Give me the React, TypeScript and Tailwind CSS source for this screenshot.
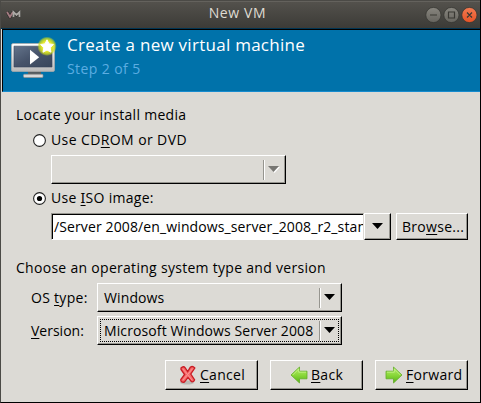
import type { ReactNode } from "react";

const raised =
  "border-t border-l border-r border-b border-t-white border-l-white border-r-black border-b-black shadow-[inset_-1px_-1px_0_#96958f]";

function Label({ children, className = "" }: { children: ReactNode; className?: string }) {
  return <span className={`block whitespace-pre leading-[20px] ${className}`}>{children}</span>;
}

function Key({ children }: { children: string }) {
  return <span className="underline decoration-1 underline-offset-2">{children}</span>;
}

function Radio({ checked = false }: { checked?: boolean }) {
  return (
    <svg width="13" height="13" viewBox="0 0 13 13" className="shrink-0">
      <circle cx="6.5" cy="6.5" r="5.9" fill="#fff" stroke="#222" strokeWidth="1.1" />
      {checked && <circle cx="6.5" cy="6.5" r="2.6" fill="#000" />}
    </svg>
  );
}

function Arrow({ disabled = false }: { disabled?: boolean }) {
  return (
    <svg width="12" height="7" viewBox="0 0 12 7" className="shrink-0">
      {disabled && <path d="M1 1h11L6.5 7z" fill="#fff" />}
      <path d="M0 0h11L5.5 6z" fill={disabled ? "#777672" : "#000"} />
    </svg>
  );
}

function Combo({
  text = "",
  width,
  disabled = false,
  focused = false,
}: {
  text?: string;
  width: string;
  disabled?: boolean;
  focused?: boolean;
}) {
  return (
    <div className={`flex h-[29px] p-[2px] ${raised} ${width}`}>
      <div
        className={`flex min-w-0 flex-1 items-center border border-dotted pl-[3px] ${focused ? "border-black" : "border-transparent"}`}
      >
        <Label className="w-0 flex-1 tracking-[0.11px]">{text}</Label>
        <span className="mr-[3px] h-[20px] w-[2px] border-r border-l border-l-[#96958f] border-r-white" />
        <Arrow disabled={disabled} />
        <span className="w-[2px] shrink-0" />
      </div>
    </div>
  );
}

function CancelIcon() {
  return (
    <svg width="18" height="20" viewBox="0 0 18 20">
      <ellipse cx="8" cy="17.5" rx="7" ry="2" fill="#a9a8a3" opacity=".65" />
      <path
        d="M2 3Q4.5 .6 6.2 2.8L8.7 6.5L11.3 2.3Q13.5 .5 15.8 3L11.8 9L15.6 14.8Q15 17.2 12.5 16.7L9 12.5L5.3 17.2Q1.5 17.5 1.8 14.5L5.6 9.5L2 4.5Z"
        fill="#f66b6b"
        stroke="#c91c24"
        strokeWidth="1.3"
      />
      <path d="M4 4L13 15M13.5 3.7L4 15" stroke="#ff9292" strokeWidth="1" />
    </svg>
  );
}

function GreenArrow({ back = false }: { back?: boolean }) {
  return (
    <svg width="18" height="18" viewBox="0 0 18 18" className={back ? "-scale-x-100" : ""}>
      <defs>
        <linearGradient id="leaf" x1="0" y1="0" x2="0" y2="1">
          <stop stopColor="#b8ee71" />
          <stop offset=".5" stopColor="#8bd83b" />
          <stop offset="1" stopColor="#55b414" />
        </linearGradient>
      </defs>
      <path d="M1 5.2H8.5V1L17 9L8.5 17V12.8H1Z" fill="url(#leaf)" stroke="#62ac28" strokeWidth=".8" />
      <path d="M2 6.2H9.3V3L15.3 9" fill="none" stroke="#c5f488" strokeWidth=".8" />
    </svg>
  );
}

function Action({ icon, children, className = "" }: { icon: ReactNode; children: ReactNode; className?: string }) {
  return (
    <button className={`flex h-[30px] w-[93px] items-center ${raised} ${className}`}>
      {icon}
      <Label className="-mt-px ml-[3px]">{children}</Label>
    </button>
  );
}

function Monitor() {
  return (
    <svg width="46" height="44" viewBox="0 0 46 44" className="shrink-0">
      <defs>
        <linearGradient id="bezel" x1="0" y1="0" x2="0" y2="1">
          <stop stopColor="#fff" />
          <stop offset="1" stopColor="#b9b9b9" />
        </linearGradient>
        <linearGradient id="screen" x1="0" y1="0" x2="1" y2="1">
          <stop stopColor="#64748b" />
          <stop offset=".5" stopColor="#46536a" />
          <stop offset="1" stopColor="#38465b" />
        </linearGradient>
        <radialGradient id="glow">
          <stop stopColor="#fffbb0" />
          <stop offset=".55" stopColor="#e1e52b" />
          <stop offset=".8" stopColor="#cddd1c" stopOpacity=".75" />
          <stop offset="1" stopColor="#cddd1c" stopOpacity="0" />
        </radialGradient>
      </defs>
      <path d="M17 35h13v4H17z" fill="#555c60" />
      <rect x="12.5" y="38.3" width="19.5" height="3.2" rx="1" fill="#d8d8d8" stroke="#929292" strokeWidth=".7" />
      <rect x=".5" y="7.5" width="43" height="28" rx="1.5" fill="url(#bezel)" stroke="#aaa" strokeWidth=".7" />
      <path d="M3 10.2h38V31H3z" fill="url(#screen)" stroke="#35445a" strokeWidth=".6" />
      <path d="M19 13.8L28.2 21.2L19 28.5Z" fill="#fff" />
      <circle cx="36" cy="10.3" r="9.8" fill="url(#glow)" />
      <path d="M36 3.8L38 7.9L42.4 8.5L39.2 11.7L40 16.2L36 14L32 16.2L32.8 11.7L29.6 8.5L34 7.9Z" fill="#fff" stroke="#fff" strokeWidth="1" strokeLinejoin="round" />
    </svg>
  );
}

function WindowControls() {
  return (
    <svg width="54" height="18" viewBox="0 0 54 18">
      <defs>
        <linearGradient id="grayButton" x1="0" y1="0" x2="0" y2="1">
          <stop stopColor="#88867f" />
          <stop offset="1" stopColor="#66645e" />
        </linearGradient>
        <linearGradient id="closeButton" x1="0" y1="0" x2="0" y2="1">
          <stop stopColor="#f37b52" />
          <stop offset="1" stopColor="#e65225" />
        </linearGradient>
      </defs>
      <circle cx="9.4" cy="9" r="7.6" fill="url(#grayButton)" stroke="#34332f" strokeWidth=".7" />
      <circle cx="27.4" cy="9" r="7.6" fill="url(#grayButton)" stroke="#34332f" strokeWidth=".7" />
      <circle cx="45.4" cy="9" r="7.6" fill="url(#closeButton)" stroke="#34332f" strokeWidth=".7" />
      <path d="M6 9h7M24.5 6h6v6h-6zM43 6.5l5 5m0-5l-5 5" fill="none" stroke="#393833" strokeWidth="1.2" />
    </svg>
  );
}

export default function App() {
  return (
    <main className="flex h-[403px] w-[481px] flex-col overflow-hidden border-r border-b border-l border-r-black border-b-black border-l-[#4b4a46] bg-[#dcdad5] font-['Open_Sans','Noto_Sans',sans-serif] text-[14px] tracking-[0.29px] text-black">
      <header className="grid h-[29px] shrink-0 grid-cols-[75px_1fr_75px] items-center border-t border-b border-t-[#4b4a46] border-b-[#003452] bg-linear-to-b from-[#54524d] to-[#3c3b37] shadow-[inset_0_1px_0_#64625d]">
        <svg width="16" height="9" viewBox="0 0 16 9" className="-mt-px ml-[5px]">
          <path d="M1 2l3 5 3-5M7.5 7V2l3 3 3-3v5" fill="none" stroke="#292926" strokeWidth="3" />
          <path d="M1 2l3 5 3-5" fill="none" stroke="#a47c82" strokeWidth="1.9" />
          <path d="M7.5 7V2l3 3 3-3v5" fill="none" stroke="#aaa8a3" strokeWidth="1.9" />
        </svg>
        <span className="-mt-[3px] -ml-[6px] text-center leading-[20px] tracking-[0.65px] text-[#dfdbd2]">New VM</span>
        <div className="ml-[19px]">
          <WindowControls />
        </div>
      </header>

      <section className="ml-px flex h-[63px] shrink-0 border-t border-b border-l border-t-black border-b-[#168bce] border-l-black bg-[#0072aa] pl-[8px]">
        <div className="pt-[6px]">
          <Monitor />
        </div>
        <div className="ml-[10px] pt-[4px]">
          <h1 className="text-[17px] leading-[22px] tracking-[0.27px] whitespace-nowrap text-white">
            Create a new virtual machine
          </h1>
          <p className="mt-[3px] leading-[20px] tracking-[0.4px] text-[#5cade2]">Step 2 of 5</p>
        </div>
      </section>

      <div className="flex flex-1 flex-col pt-[13px] pr-[12px] pl-[15px]">
        <Label>Locate your install media</Label>
        <div className="mt-[5px] flex h-[20px] items-center pl-[17px]">
          <Radio />
          <Label className="ml-[5px] tracking-[0.4px]">
            Use CD<Key>R</Key>OM or DVD
          </Label>
        </div>
        <div className="mt-[5px] pl-[35px]">
          <Combo width="w-[235px]" disabled />
        </div>
        <div className="mt-[4px] flex h-[20px] items-center pl-[17px]">
          <Radio checked />
          <Label className="ml-[5px]">
            Use <span className="font-['Noto_Sans']"><Key>I</Key></span>SO image:
          </Label>
        </div>
        <div className="mt-[5px] flex h-[27px] pl-[35px]">
          <div className="flex w-[313px] items-center overflow-hidden border-t border-r border-b border-l border-t-[#96958f] border-r-[#dcdad5] border-b-white border-l-[#96958f] bg-white pl-[2px] shadow-[inset_1px_1px_0_#000]">
            <Label className="tracking-[0.12px]">/Server 2008/en_windows_server_2008_r2_standard</Label>
          </div>
          <button className={`flex w-[27px] items-center justify-center ${raised}`}>
            <Arrow />
          </button>
          <button className={`ml-[5px] flex w-[72px] items-center pl-[5px] ${raised}`}>
            <Label>
              Bro<Key>w</Key>se...
            </Label>
          </button>
        </div>

        <Label className="mt-[18px]">Choose an operating system type and version</Label>
        <div className="mt-[5px] flex items-center pl-[15px]">
          <Label className="w-[66px]">
            OS <Key>t</Key>ype:
          </Label>
          <Combo width="w-[245px]" text="Windows" />
        </div>
        <div className="mt-[4px] flex items-center pl-[15px]">
          <Label className="w-[66px] tracking-[0px]">
            <Key>V</Key>ersion:
          </Label>
          <Combo width="w-[245px]" text="Microsoft Windows Server 2008" focused />
        </div>
        <div className="mt-[15px] flex justify-end gap-[12px]">
          <Action icon={<CancelIcon />} className="pl-[13px]">
            <Key>C</Key>ancel
          </Action>
          <Action icon={<GreenArrow back />} className="pl-[19px]">
            <Key>B</Key>ack
          </Action>
          <Action icon={<GreenArrow />} className="pl-[9px]">
            <Key>F</Key>orward
          </Action>
        </div>
      </div>
    </main>
  );
}
